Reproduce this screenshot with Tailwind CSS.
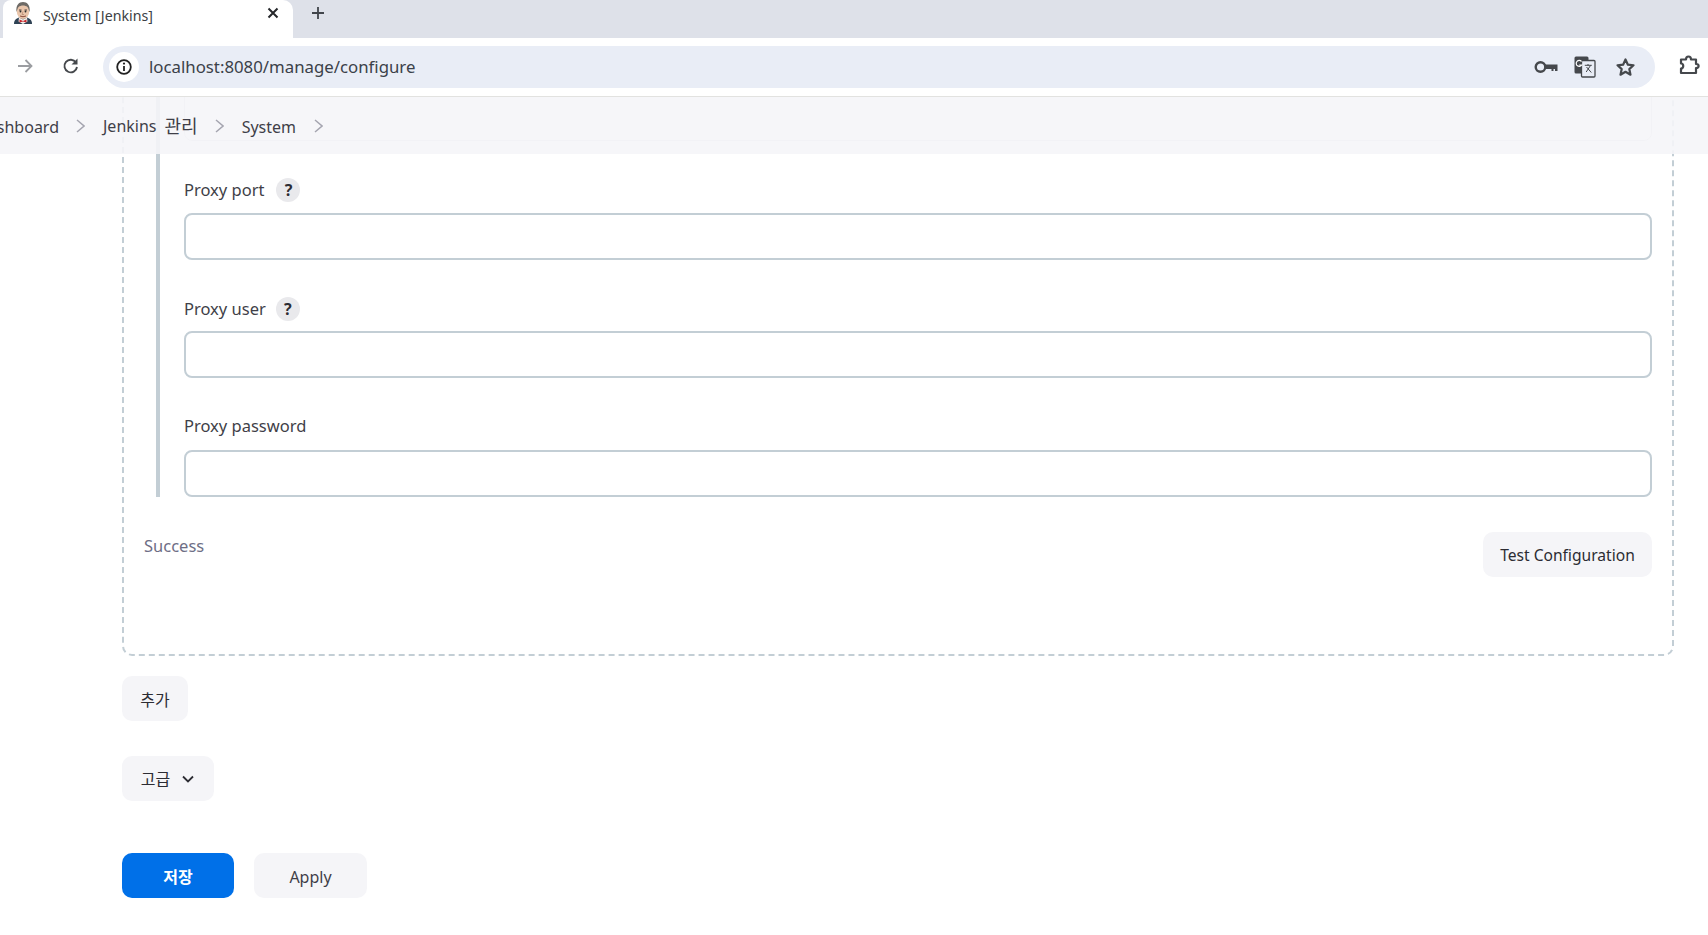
<!doctype html>
<html lang="ko">
<head>
<meta charset="utf-8">
<title>System [Jenkins]</title>
<script src="https://cdn.jsdelivr.net/npm/@tailwindcss/browser@4"></script>
</head>
<body class="bg-white overflow-hidden">
<div class="w-[1708px] h-[935px] overflow-hidden flex flex-col font-['Noto_Sans','Noto_Sans_CJK_KR',sans-serif] text-[#2c2c33]">
  <!-- tab strip -->
  <div class="h-[38px] shrink-0 bg-[#dee1e9] flex items-start">
    <div class="w-[290px] ml-[3px] h-[38px] bg-white rounded-tl-[8px] rounded-tr-[10px] relative flex items-center pl-[10px]">
      <svg class="w-[20px] h-[24px] -mt-[12px]" viewBox="0 0 20 24">
        <path d="M1 23c0-4 2-5.500 5-6.500h8c3 1 5 2.500 5 6.500z" fill="#2f4254"/>
        <path d="M6 16.500l4 2 4-2 .5 4-4.500 2.500-4.500-2.500z" fill="#f2efe9"/>
        <path d="M6.500 18.500l3.500 1.500 3.500-1.500v3l-3.500-1-3.500 1z" fill="#c8262c"/>
        <ellipse cx="10" cy="10" rx="6.300" ry="8" fill="#e9c5ab"/>
        <path d="M3.500 11C2.500 4 6 1 10 1s7.500 3 6.500 10c-.8-2.500-1-3.500-2-5C12 4 8 4 5.500 6c-1 1.500-1.200 2.500-2 5z" fill="#6d6a66"/>
        <path d="M6 9h2.500M11.500 9H14" stroke="#4c4340" stroke-width="1"/>
        <circle cx="7.500" cy="10.500" r=".9" fill="#2c2c2c"/><circle cx="12.500" cy="10.500" r=".9" fill="#2c2c2c"/>
        <path d="M10 10.500l-1 3h2" stroke="#b98a72" fill="none" stroke-width=".8"/>
        <path d="M7 15q3 1.500 6 0" stroke="#8a4b3c" fill="none"/>
      </svg>
      <span class="ml-[10px] text-[14.2px] leading-none -mt-[5px] text-[#3c4043] whitespace-nowrap">System [Jenkins]</span>
      <svg class="absolute left-[263px] top-[6px] w-[14px] h-[14px]" viewBox="0 0 14 14"><path d="M2.500 2.500l9 9M11.500 2.500l-9 9" stroke="#26282b" stroke-width="2"/></svg>
    </div>
    <svg class="ml-[18px] mt-[6px] w-[14px] h-[14px]" viewBox="0 0 14 14"><path d="M7 1v12M1 7h12" stroke="#41454b" stroke-width="1.800"/></svg>
  </div>
  <!-- toolbar -->
  <div class="h-[59px] shrink-0 bg-white border-b border-[#e2e2e0] flex items-start">
    <svg class="ml-[16px] mt-[19px] w-[18px] h-[18px]" viewBox="0 0 18 18"><path d="M2 9h13M9.500 3l6 6-6 6" fill="none" stroke="#9b9da1" stroke-width="1.800"/></svg>
    <svg class="ml-[28px] mt-[19px] w-[17px] h-[18px]" viewBox="0 0 17 18"><path d="M14 5.500A6.300 6.300 0 1 0 15 10" fill="none" stroke="#45484c" stroke-width="1.900"/><path d="M15.500 1.500v6h-6z" fill="#45484c"/></svg>
    <div class="ml-[24px] mt-[8px] w-[1552px] h-[42px] rounded-full bg-[#e9edf6] flex items-center pl-[6px] pr-[19px]">
      <div class="w-[30px] h-[30px] rounded-full bg-white flex items-center justify-center">
        <svg class="w-[18px] h-[18px]" viewBox="0 0 18 18"><circle cx="9" cy="9" r="6.800" fill="none" stroke="#222" stroke-width="1.800"/><path d="M9 8v5" stroke="#222" stroke-width="1.800"/><circle cx="9" cy="5.600" r="1.100" fill="#222"/></svg>
      </div>
      <span class="ml-[10px] mt-[1px] text-[16.8px] text-[#3b4149] leading-none">localhost:8080/manage/configure</span>
      <div class="ml-auto flex items-center">
        <svg class="w-[24px] h-[14px]" viewBox="0 0 24 14"><circle cx="6.500" cy="7" r="4.800" fill="none" stroke="#45484c" stroke-width="2.400"/><path d="M11 4.500H23.500V11H21V9h-1.500v2h-2V9H11z" fill="#45484c"/></svg>
        <svg class="ml-[16px] w-[22px] h-[22px]" viewBox="0 0 22 22"><rect x="0.500" y="0.500" width="14" height="17" rx="1.500" fill="#45484c"/><rect x="7.500" y="4.500" width="13.500" height="16.500" rx="1" fill="#e9edf6" stroke="#45484c" stroke-width="1.300"/><path d="M10.800 9.300h7M14 8v1.500M16.500 9.500l-4.300 6.500M12.500 11l4.800 5.500" stroke="#45484c" stroke-width="1" fill="none"/><path d="M7.500 5.500A3 3 0 1 0 7.800 9H5.200" fill="none" stroke="#fff" stroke-width="1.200"/></svg>
        <svg class="ml-[19px] w-[21px] h-[20px]" viewBox="0 0 21 20"><path d="M10.500 2.500l2.400 5.200 5.600.600-4.200 3.800 1.200 5.600-5-2.900-5 2.900 1.200-5.600-4.200-3.800 5.600-.600z" fill="none" stroke="#45484c" stroke-width="2.200" stroke-linejoin="round"/></svg>
      </div>
    </div>
    <svg class="ml-[24px] mt-[15px] w-[22px] h-[22px]" viewBox="0 0 22 22"><path d="M2 6.500h5c0-4 5-4 5 0h5v4.500c3.500 0 3.500 4 0 4v5H2v-4.500c3 0 3-5 0-5z" fill="none" stroke="#45484c" stroke-width="2.200" stroke-linejoin="round"/></svg>
  </div>
  <!-- page -->
  <div class="relative flex-1 overflow-hidden">
    <!-- translucent breadcrumb bar over the page -->
    <div class="absolute z-10 left-0 right-0 top-0 h-[57px] bg-[#f5f5f8]/90 flex items-center text-[16px] text-[#3f3f48]">
      <span class="w-[59px] h-[22px] overflow-hidden relative mt-[2px]"><span class="absolute right-0 top-0 leading-[22px] whitespace-nowrap">Dashboard</span></span>
      <svg class="ml-[17px] w-[9px] h-[16px]" viewBox="0 0 9 16"><path d="M1 2l7 6-7 6" fill="none" stroke="#a5a5b0" stroke-width="1.500"/></svg>
      <span class="ml-[18px] mt-[1px] flex items-center gap-[8px] leading-none whitespace-nowrap"><span>Jenkins</span><span class="text-[18px]">관리</span></span>
      <svg class="ml-[17px] w-[9px] h-[16px]" viewBox="0 0 9 16"><path d="M1 2l7 6-7 6" fill="none" stroke="#a5a5b0" stroke-width="1.500"/></svg>
      <span class="ml-[18px] mt-[2px] leading-none">System</span>
      <svg class="ml-[18px] w-[9px] h-[16px]" viewBox="0 0 9 16"><path d="M1 2l7 6-7 6" fill="none" stroke="#a5a5b0" stroke-width="1.500"/></svg>
    </div>
    <div class="pl-[122px] pr-[34px]">
      <!-- dashed repeatable block -->
      <div class="-mt-[10px] h-[569px] border-2 border-dashed border-[#c3ced5] rounded-[10px] pl-[32px] pr-[20px]">
        <div class="border-l-4 border-[#c3ced5] pl-[24px] h-[408px]">
          <div class="h-[52px] border border-[#d8d8de] rounded-[8px] w-[1468px]"></div>
          <div class="pt-[36px]">
            <div class="flex items-center h-[26px]">
              <span class="text-[16.5px] leading-none text-[#3f3f48]">Proxy port</span>
              <span class="ml-[12px] w-[24px] h-[24px] rounded-full bg-[#e9e9ec] flex items-center justify-center text-[16px] font-bold leading-none text-[#2c2c33]">?</span>
            </div>
            <div class="mt-[10px] h-[47px] w-[1468px] rounded-[8px] border-2 border-[#c3ced5] bg-white"></div>
            <div class="mt-[36px] flex items-center h-[26px]">
              <span class="text-[16.5px] leading-none text-[#3f3f48]">Proxy user</span>
              <span class="ml-[10px] w-[24px] h-[24px] rounded-full bg-[#e9e9ec] flex items-center justify-center text-[16px] font-bold leading-none text-[#2c2c33]">?</span>
            </div>
            <div class="mt-[9px] h-[47px] w-[1468px] rounded-[8px] border-2 border-[#c3ced5] bg-white"></div>
            <div class="mt-[35px] flex items-center h-[26px]">
              <span class="text-[16.5px] leading-none text-[#3f3f48]">Proxy password</span>
            </div>
            <div class="mt-[11px] h-[47px] w-[1468px] rounded-[8px] border-2 border-[#c3ced5] bg-white"></div>
          </div>
        </div>
        <div class="mt-[35px] -ml-[12px] flex justify-between items-start w-[1508px]">
          <span class="mt-[2px] text-[16.5px] leading-[24px] text-[#6e6e85]">Success</span>
          <button class="w-[169px] h-[45px] pt-[2px] rounded-[10px] bg-[#f5f5f8] text-[15.6px] text-[#2c2c33]">Test Configuration</button>
        </div>
      </div>
      <button class="mt-[20px] block w-[66px] h-[45px] pt-[2px] rounded-[10px] bg-[#f5f5f8] text-[16px] text-[#2c2c33]">추가</button>
      <button class="mt-[35px] flex items-center justify-center gap-[11px] w-[92px] h-[45px] rounded-[10px] bg-[#f5f5f8] text-[16px] text-[#2c2c33]"><span class="pt-[1px]">고급</span>
        <svg class="w-[14px] h-[10px]" viewBox="0 0 14 10"><path d="M2 2.500l5 5 5-5" fill="none" stroke="#2c2c33" stroke-width="1.800"/></svg>
      </button>
      <div class="mt-[52px] flex gap-[20px]">
        <button class="w-[112px] h-[45px] pt-[2px] rounded-[10px] bg-[#0070e8] text-[16px] font-bold text-white">저장</button>
        <button class="w-[113px] h-[45px] pt-[2px] rounded-[10px] bg-[#f5f5f8] text-[16px] text-[#3f3f48]">Apply</button>
      </div>
    </div>
  </div>
</div>
</body>
</html>
